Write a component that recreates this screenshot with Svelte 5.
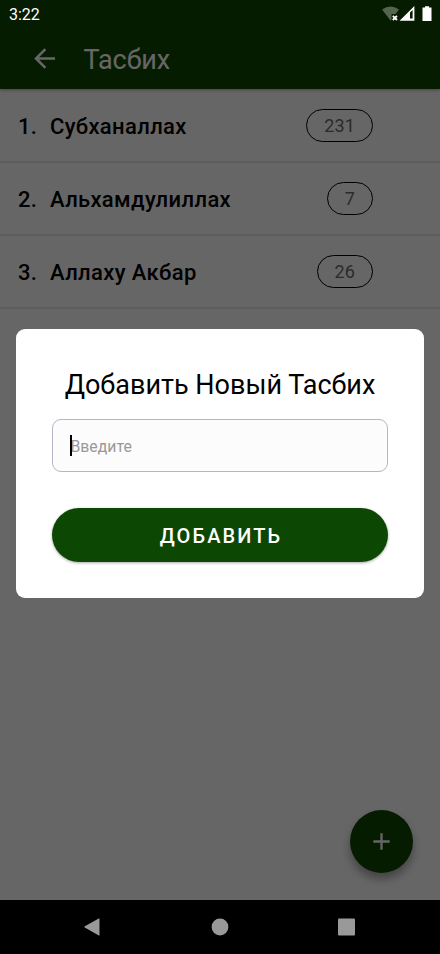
<script lang="ts">
    let items = [
        { id: 1, name: 'Субханаллах', count: 231 },
        { id: 2, name: 'Альхамдулиллах', count: 7 },
        { id: 3, name: 'Аллаху Акбар', count: 26 },
    ];
    let newName = '';
    let showModal = true;

    function addItem() {
        const name = newName.trim();
        if (!name) {
            return;
        }
        items = [...items, { id: items.length + 1, name, count: 0 }];
        newName = '';
        showModal = false;
    }
</script>

<div class="phone">
    <header>
        <div class="status">
            <span>3:22</span>
            <svg width="52" height="18" viewBox="0 0 52 18">
                <path d="M1 4.6 Q9.5 -1.8 18 4.6 L14.5 9 H10.5 V15 L9.5 15.6 Z" fill="#53644f" />
                <path d="M11.8 10.8 l4.2 4.2 M16 10.8 l-4.2 4.2" stroke="#fff" stroke-width="1.8" />
                <path d="M18.6 15.8 L33.4 1 V15.8 Z" fill="#fff" />
                <path d="M29 7.6 L31.6 5 V13.6 H29 Z" fill="#051c02" />
                <path d="M41.5 2.6 H44 V1.2 H48 V2.6 H50.5 V16 H41.5 Z" fill="#fff" />
            </svg>
        </div>
        <div class="toolbar">
            <svg width="22" height="22" viewBox="0 0 22 22" fill="none" stroke="#fff" stroke-width="2.5">
                <path d="M21 10.5 H2.6 M11.4 1.2 L2 10.5 L11.4 19.8" />
            </svg>
            <h1>Тасбих</h1>
        </div>
    </header>

    <main>
        <ul>
            {#each items as item (item.id)}
                <li>
                    <span class="number">{item.id}.</span>
                    <span class="name">{item.name}</span>
                    <span class="count">{item.count}</span>
                </li>
            {/each}
        </ul>
        <button class="fab" aria-label="Добавить" on:click={() => (showModal = true)}>
            <svg width="17" height="17" viewBox="0 0 17 17" stroke="#fff" stroke-width="2.3">
                <path d="M8.5 0.3 V16.7 M0.3 8.5 H16.7" />
            </svg>
        </button>
    </main>

    {#if showModal}
        <div class="overlay">
            <form class="modal" on:submit|preventDefault={addItem}>
                <h2>Добавить Новый Тасбих</h2>
                <div class="field">
                    <input type="text" placeholder="Введите" bind:value={newName} />
                    <span class="cursor"></span>
                </div>
                <button class="submit" type="submit">ДОБАВИТЬ</button>
            </form>
        </div>
    {/if}

    <nav>
        <svg width="18" height="20" viewBox="0 0 18 20"><path d="M1.8 9.2 L15.8 1.4 Q16.5 1.2 16.5 2 V18 Q16.5 18.8 15.8 18.5 L1.8 10.6 Q0.8 9.9 1.8 9.2 Z" /></svg>
        <svg width="18" height="18" viewBox="0 0 18 18"><circle cx="9" cy="9" r="8.4" /></svg>
        <svg width="18" height="18" viewBox="0 0 18 18"><rect x="0" y="0.5" width="17" height="17" rx="1" /></svg>
    </nav>
</div>

<style>
    .phone {
        position: relative;
        display: flex;
        flex-direction: column;
        width: 440px;
        height: 954px;
        overflow: hidden;
        background: #fff;
        font-family: Roboto, "Liberation Sans", sans-serif;
    }
    header {
        height: 89px;
        background: #0d4704;
        color: #fff;
        box-shadow: 0 1px 3px rgba(0, 0, 0, 0.35);
    }
    .status {
        position: relative;
        z-index: 2;
        display: flex;
        justify-content: space-between;
        height: 28px;
        padding: 5px 7px 0 9px;
        box-sizing: border-box;
        font-size: 16px;
        line-height: 19px;
    }
    .toolbar {
        display: flex;
        align-items: center;
        gap: 27.5px;
        height: 61px;
        padding-left: 34px;
    }
    h1 {
        margin: 3px 0 0;
        font-size: 27px;
        font-weight: 400;
        line-height: 32px;
        letter-spacing: -0.1px;
    }
    main {
        position: relative;
        flex: 1;
    }
    ul {
        margin: 0;
        padding: 1px 0 0;
        list-style: none;
    }
    li {
        display: flex;
        align-items: center;
        height: 73px;
        padding: 0 67px 0 18px;
        box-sizing: border-box;
        border-bottom: 2px solid #e9e9e9;
        font-size: 22px;
        font-weight: 500;
        letter-spacing: 0.36px;
    }
    .number {
        width: 32px;
        padding-top: 2px;
    }
    .name {
        flex: 1;
        padding-top: 2px;
    }
    .count {
        padding: 0 17px;
        border: 1px solid #000;
        border-radius: 17px;
        color: #6c6c6c;
        font-size: 18px;
        font-weight: 400;
        line-height: 31px;
        letter-spacing: 0.1px;
    }
    .fab {
        position: absolute;
        right: 27px;
        bottom: 27px;
        display: flex;
        align-items: center;
        justify-content: center;
        width: 63px;
        height: 63px;
        padding: 0;
        border: none;
        border-radius: 50%;
        background: #0d4704;
        box-shadow: 0 6px 10px rgba(0, 0, 0, 0.35);
    }
    .overlay {
        position: absolute;
        inset: 0 0 54px;
        display: flex;
        align-items: flex-start;
        justify-content: center;
        padding-top: 329px;
        box-sizing: border-box;
        background: rgba(0, 0, 0, 0.6);
    }
    .modal {
        width: 408px;
        height: 269px;
        padding: 39px 36px 36px;
        box-sizing: border-box;
        border-radius: 9px;
        background: #fff;
    }
    h2 {
        margin: 0 0 16px;
        font-size: 27px;
        font-weight: 400;
        line-height: 35px;
        text-align: center;
        white-space: nowrap;
    }
    .field {
        position: relative;
        height: 53px;
    }
    input {
        width: 100%;
        height: 53px;
        padding: 2px 17.5px 0;
        box-sizing: border-box;
        border: 1px solid #b5b5c6;
        border-radius: 9px;
        outline: none;
        background: #fcfcfd;
        font-family: inherit;
        font-size: 15.8px;
    }
    input::placeholder {
        color: #999;
    }
    .cursor {
        position: absolute;
        top: 16px;
        left: 18px;
        width: 2px;
        height: 21px;
        background: #000;
    }
    .submit {
        display: block;
        width: 100%;
        height: 54px;
        margin-top: 36px;
        padding: 2px 0 0 2px;
        border: none;
        border-radius: 27px;
        background: #0d4704;
        box-shadow: 0 1px 3px rgba(0, 0, 0, 0.35);
        color: #fff;
        font-family: inherit;
        font-size: 20px;
        font-weight: 500;
        letter-spacing: 2.1px;
    }
    nav {
        display: flex;
        align-items: center;
        justify-content: space-between;
        height: 54px;
        padding: 0 84px 0 83px;
        background: #000;
        fill: #999;
    }
</style>
